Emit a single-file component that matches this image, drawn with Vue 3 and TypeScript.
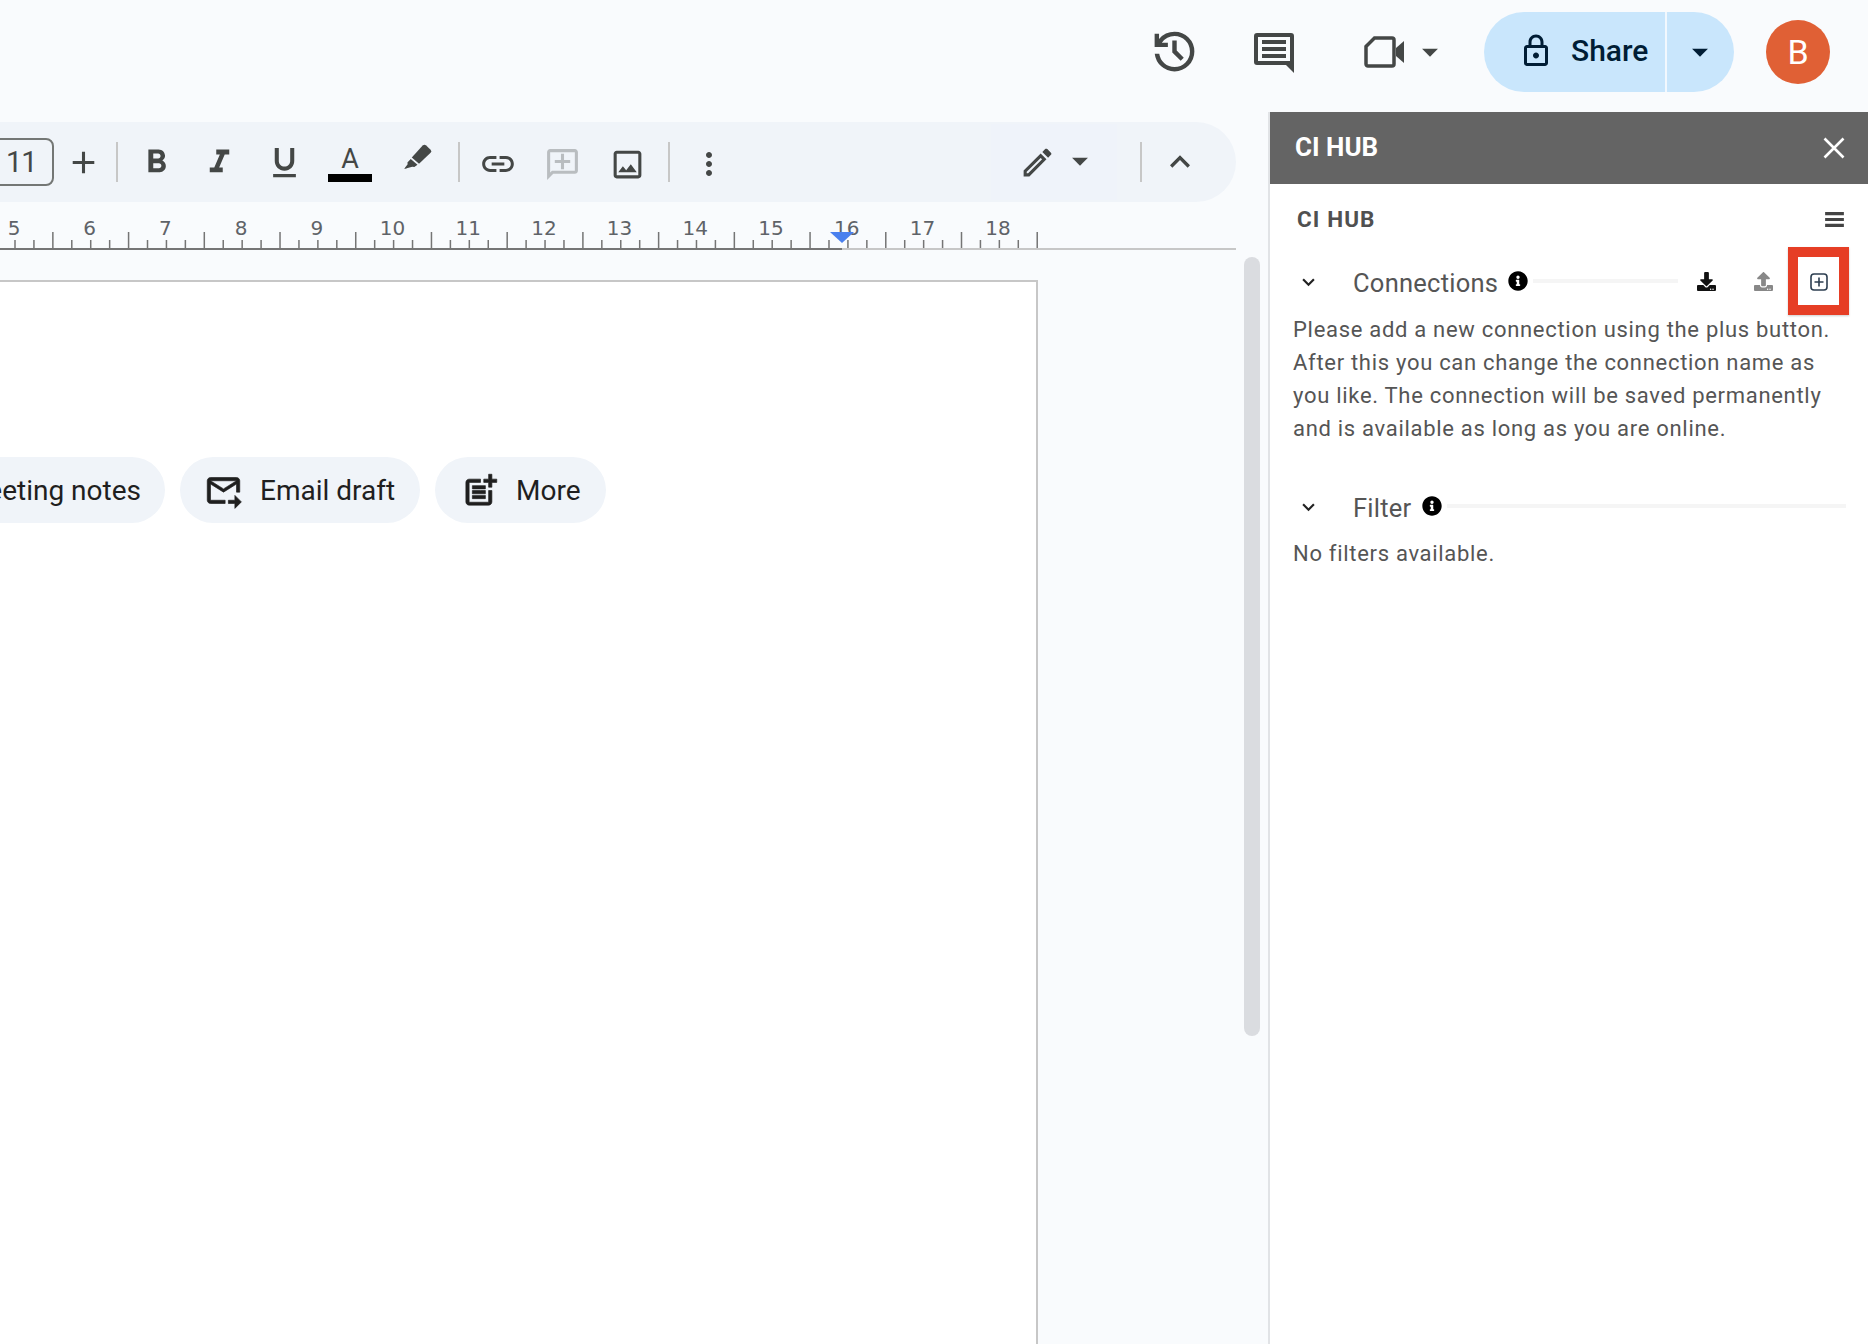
<script setup lang="ts">
const icons: Record<string, string> = {
  history: 'M12 21q-3.45 0-6.012-2.288T3.05 13H5.1q.35 2.6 2.313 4.3T12 19q2.925 0 4.963-2.037T19 12q0-2.925-2.037-4.962T12 5q-1.725 0-3.225.8T6.25 8H9v2H3V4h2v2.35q1.275-1.6 3.113-2.475T12 3q3.75 0 6.375 2.625T21 12q0 3.75-2.625 6.375T12 21Zm2.8-4.8L11 12.4V7h2v4.6l3.2 3.2-1.4 1.4Z',
  lock: 'M18 8h-1V6c0-2.76-2.24-5-5-5S7 3.24 7 6v2H6c-1.1 0-2 .9-2 2v10c0 1.1.9 2 2 2h12c1.1 0 2-.9 2-2V10c0-1.1-.9-2-2-2zM9 6c0-1.66 1.34-3 3-3s3 1.34 3 3v2H9V6zm9 14H6V10h12v10zm-6-3c1.1 0 2-.9 2-2s-.9-2-2-2-2 .9-2 2 .9 2 2 2z',
  caret: 'M7 10l5 5 5-5z',
  plus: 'M19 13h-6v6h-2v-6H5v-2h6V5h2v6h6v2z',
  bold: 'M15.6 10.79c.97-.67 1.65-1.77 1.65-2.79 0-2.26-1.75-4-4-4H7v14h7.04c2.09 0 3.71-1.7 3.71-3.79 0-1.52-.86-2.82-2.15-3.42zM10 6.5h3c.83 0 1.5.67 1.5 1.5s-.67 1.5-1.5 1.5h-3v-3zm3.5 9H10v-3h3.5c.83 0 1.5.67 1.5 1.5s-.67 1.5-1.5 1.5z',
  italic: 'M10 4v3h2.21l-3.42 8H6v3h8v-3h-2.21l3.42-8H18V4z',
  underline: 'M12 17c3.31 0 6-2.69 6-6V3h-2.5v8c0 1.93-1.57 3.5-3.5 3.5S8.5 12.93 8.5 11V3H6v8c0 3.31 2.69 6 6 6zm-7 2v2h14v-2H5z',
  link: 'M3.9 12c0-1.71 1.39-3.1 3.1-3.1h4V7H7c-2.76 0-5 2.24-5 5s2.24 5 5 5h4v-1.9H7c-1.71 0-3.1-1.39-3.1-3.1zM8 13h8v-2H8v2zm9-6h-4v1.9h4c1.71 0 3.1 1.39 3.1 3.1s-1.39 3.1-3.1 3.1h-4V17h4c2.76 0 5-2.24 5-5s-2.24-5-5-5z',
  comment: 'M22 4c0-1.1-.9-2-2-2H4c-1.1 0-2 .9-2 2v12c0 1.1.9 2 2 2h14l4 4V4zm-2 13.17L18.83 16H4V4h16v13.17zM13 5h-2v4H7v2h4v4h2v-4h4V9h-4V5z',
  image: 'M19 5v14H5V5h14m0-2H5c-1.1 0-2 .9-2 2v14c0 1.1.9 2 2 2h14c1.1 0 2-.9 2-2V5c0-1.1-.9-2-2-2zm-4.86 8.86l-3 3.87L9 13.14 6 17h12l-3.86-5.14z',
  dots: 'M12 8c1.1 0 2-.9 2-2s-.9-2-2-2-2 .9-2 2 .9 2 2 2zm0 2c-1.1 0-2 .9-2 2s.9 2 2 2 2-.9 2-2-.9-2-2-2zm0 6c-1.1 0-2 .9-2 2s.9 2 2 2 2-.9 2-2-.9-2-2-2z',
  pencil: 'M14.06 9.02l.92.92L5.92 19H5v-.92l9.06-9.06M17.66 3c-.25 0-.51.1-.7.29l-1.83 1.83 3.75 3.75 1.83-1.83c.39-.39.39-1.02 0-1.41l-2.34-2.34c-.2-.2-.45-.29-.71-.29zm-3.6 3.19L3 17.25V21h3.75L17.81 9.94l-3.75-3.75z',
  chevronUp: 'M7.41 15.41L12 10.83l4.59 4.58L18 14l-6-6-6 6z',
  email: 'M20 4H4c-1.1 0-2 .9-2 2v12c0 1.1.9 2 2 2h9v-2H4V8l8 5 8-5v5h2V6c0-1.1-.9-2-2-2zm-8 7L4 6h16l-8 5zm7 4l4 4-4 4v-3h-4v-2h4v-3z',
  postAdd: 'M17 19.22H5V7h7V5H5c-1.1 0-2 .9-2 2v12c0 1.1.9 2 2 2h12c1.1 0 2-.9 2-2v-7h-2v7.22zM19 2h-2v3h-3c.01.01 0 2 0 2h3v2.99c.01.01 2 0 2 0V7h3V5h-3V2zM7 9h8v2H7zM7 12v2h8v-2h-3zM7 15h8v2H7z',
  info: 'M256 8C119.043 8 8 119.083 8 256c0 136.997 111.043 248 248 248s248-111.003 248-248C504 119.083 392.957 8 256 8zm0 110c23.196 0 42 18.804 42 42s-18.804 42-42 42-42-18.804-42-42 18.804-42 42-42zm56 254c0 6.627-5.373 12-12 12h-88c-6.627 0-12-5.373-12-12v-24c0-6.627 5.373-12 12-12h12v-64h-12c-6.627 0-12-5.373-12-12v-24c0-6.627 5.373-12 12-12h64c6.627 0 12 5.373 12 12v100h12c6.627 0 12 5.373 12 12v24z',
  download: 'M216 0h80c13.3 0 24 10.7 24 24v168h87.7c17.8 0 26.7 21.5 14.1 34.1L269.7 378.3c-7.5 7.5-19.8 7.5-27.3 0L90.1 226.1c-12.6-12.6-3.7-34.1 14.1-34.1H192V24c0-13.3 10.7-24 24-24zm296 376v112c0 13.3-10.7 24-24 24H24c-13.3 0-24-10.7-24-24V376c0-13.3 10.7-24 24-24h146.7l49 49c20.1 20.1 52.5 20.1 72.6 0l49-49H488c13.3 0 24 10.7 24 24zm-124 88c0-11-9-20-20-20s-20 9-20 20 9 20 20 20 20-9 20-20zm64 0c0-11-9-20-20-20s-20 9-20 20 9 20 20 20 20-9 20-20z',
  upload: 'M296 384h-80c-13.3 0-24-10.7-24-24V192h-87.7c-17.8 0-26.7-21.5-14.1-34.1L242.3 5.7c7.5-7.5 19.8-7.5 27.3 0l152.2 152.2c12.6 12.6 3.7 34.1-14.1 34.1H320v168c0 13.3-10.7 24-24 24zm216-8v112c0 13.3-10.7 24-24 24H24c-13.3 0-24-10.7-24-24V376c0-13.3 10.7-24 24-24h136v8c0 30.9 25.1 56 56 56h80c30.9 0 56-25.1 56-56v-8h136c13.3 0 24 10.7 24 24zm-124 88c0-11-9-20-20-20s-20 9-20 20 9 20 20 20 20-9 20-20zm64 0c0-11-9-20-20-20s-20 9-20 20 9 20 20 20 20-9 20-20z',
}

const tickStep = 18.93
const ticks = Array.from({ length: 56 }, (_, i) => {
  const x = 15 + tickStep * i
  return { x, top: i % 4 === 2 ? 30 : 38 }
}).filter((t) => t.x <= 1038)

const numbers = Array.from({ length: 14 }, (_, i) => ({ label: String(i + 5), x: 14 + 75.7 * i }))

const sections = [
  { title: 'Connections', actions: true, text: 'Please add a new connection using the plus button. After this you can change the connection name as you like. The connection will be saved permanently and is available as long as you are online.' },
  { title: 'Filter', actions: false, text: 'No filters available.' },
]
</script>

<template>
  <div class="app">
    <header class="topbar">
      <svg class="ic-history" viewBox="0 0 24 24"><path :d="icons.history" /></svg>
      <svg class="ic-chat" viewBox="0 0 40 40">
        <path d="M3 0h34a3 3 0 0 1 3 3v37l-8-8H3a3 3 0 0 1-3-3V3a3 3 0 0 1 3-3zm1 4v24h32V4z" />
        <path d="M8 7h24v4H8zM8 14h24v4H8zM8 21h24v4H8z" />
      </svg>
      <svg class="ic-meet" viewBox="0 0 40 32">
        <path class="meet-body" d="M10.5 2H28a2 2 0 0 1 2 2v24a2 2 0 0 1-2 2H4a2 2 0 0 1-2-2V10.500z" />
        <path d="M32 12l8-7v22l-8-7z" />
      </svg>
      <svg class="ic-caret meet-caret" viewBox="0 0 24 24"><path :d="icons.caret" /></svg>
      <div class="share">
        <div class="share-main">
          <svg class="ic-lock" viewBox="0 0 24 24"><path :d="icons.lock" /></svg>
          <span class="share-label">Share</span>
        </div>
        <div class="share-more">
          <svg class="ic-caret" viewBox="0 0 24 24"><path :d="icons.caret" /></svg>
        </div>
      </div>
      <div class="avatar">B</div>
    </header>

    <div class="main">
      <section class="docs">
        <div class="toolbar">
          <div class="size-box">11</div>
          <span class="slot s-plus"><svg class="ic-m" viewBox="0 0 24 24"><path :d="icons.plus" /></svg></span>
          <i class="sep sep-a"></i>
          <span class="slot s-b"><svg class="ic-f" viewBox="0 0 24 24"><path :d="icons.bold" /></svg></span>
          <span class="slot s-i"><svg class="ic-f" viewBox="0 0 24 24"><path :d="icons.italic" /></svg></span>
          <span class="slot s-u"><svg class="ic-f" viewBox="0 0 24 24"><path :d="icons.underline" /></svg></span>
          <span class="slot s-a"><span class="letter-a">A</span><i class="color-bar"></i></span>
          <span class="slot s-h">
            <svg class="ic-highlight" viewBox="0 0 27 24">
              <path d="M18 1.500a2.500 2.500 0 0 1 3.400 0l4 3.800a2.400 2.400 0 0 1 0 3.400L14.500 19 7.500 13z" />
              <path d="M6.500 14.500l6.500 5.500-3 2.200-2-.2L0 24l3.500-4.500-.2-1.800z" />
            </svg>
          </span>
          <i class="sep sep-b"></i>
          <span class="slot s-l"><svg class="ic-link" viewBox="0 0 24 24"><path :d="icons.link" /></svg></span>
          <span class="slot s-c"><svg class="ic-comment" viewBox="0 0 24 24"><path :d="icons.comment" /></svg></span>
          <span class="slot s-im"><svg class="ic-m" viewBox="0 0 24 24"><path :d="icons.image" /></svg></span>
          <i class="sep sep-c"></i>
          <span class="slot s-d"><svg class="ic-m" viewBox="0 0 24 24"><path :d="icons.dots" /></svg></span>
          <div class="mode">
            <svg class="ic-m" viewBox="0 0 24 24"><path :d="icons.pencil" /></svg>
            <svg class="ic-caret mode-caret" viewBox="0 0 24 24"><path :d="icons.caret" /></svg>
          </div>
          <i class="sep sep-d"></i>
          <span class="slot s-up"><svg class="ic-up" viewBox="0 0 24 24"><path :d="icons.chevronUp" /></svg></span>
        </div>

        <svg class="ruler" viewBox="0 0 1236 50" width="1236" height="50">
          <rect x="0" y="46" width="842" height="2" fill="#757575" />
          <rect x="842" y="46" width="394" height="2" fill="#c7c7c7" />
          <rect v-for="t in ticks" :key="t.x" :x="t.x - 0.75" :y="t.top" width="1.500" :height="46 - t.top" fill="#757575" />
          <text v-for="n in numbers" :key="n.label" :x="n.x" y="33" class="ruler-num" text-anchor="middle">{{ n.label }}</text>
          <path d="M830 30h24l-12 11z" fill="#4a80ee" />
        </svg>

        <div class="canvas">
          <div class="page">
            <div class="chips">
              <div class="chip chip-first"><span>Meeting notes</span></div>
              <div class="chip chip-email">
                <svg class="ic-chip" viewBox="0 0 24 24"><path :d="icons.email" /></svg>
                <span>Email draft</span>
              </div>
              <div class="chip chip-more">
                <svg class="ic-chip" viewBox="0 0 24 24"><path :d="icons.postAdd" /></svg>
                <span>More</span>
              </div>
            </div>
          </div>
          <div class="scrollbar"></div>
        </div>
      </section>

      <aside class="panel">
        <div class="panel-head">
          <span>CI HUB</span>
          <svg class="ic-close" viewBox="0 0 22 22"><path d="M1.500 1.500l19 19M20.500 1.500l-19 19" /></svg>
        </div>
        <div class="panel-sub">
          <span>CI HUB</span>
          <svg class="ic-bars" viewBox="0 0 20 16"><path d="M0 0h20v3.400H0zM0 6.300h20v3.400H0zM0 12.600h20V16H0z" /></svg>
        </div>

        <div v-for="s in sections" :key="s.title" class="section" :class="{ 'section-actions': s.actions }">
          <div class="sec-row">
            <svg class="ic-chev" viewBox="0 0 12 8"><path d="M1 1l5 5 5-5" /></svg>
            <span class="sec-title">{{ s.title }}</span>
            <svg class="ic-info" viewBox="0 0 512 512"><path :d="icons.info" /></svg>
            <i class="sec-line"></i>
            <template v-if="s.actions">
              <svg class="ic-act" viewBox="0 0 512 512"><path :d="icons.download" /></svg>
              <svg class="ic-act ic-act-up" viewBox="0 0 512 512"><path :d="icons.upload" /></svg>
              <div class="add-box">
                <svg class="ic-add" viewBox="0 0 18 18"><rect x="1" y="1" width="16" height="16" rx="3" /><path d="M9 4.500v9M4.500 9h9" /></svg>
              </div>
            </template>
          </div>
          <p class="sec-text">{{ s.text }}</p>
        </div>
      </aside>
    </div>
  </div>
</template>

<style>
html, body { margin: 0; padding: 0; overflow: hidden; background: #f9fbfd; }
</style>

<style scoped>
* { box-sizing: border-box; }
.app { width: 1868px; height: 1344px; overflow: hidden; background: #f9fbfd; font-family: Roboto, "Liberation Sans", sans-serif; }
svg { display: block; flex-shrink: 0; }
i { display: block; }

.topbar { height: 112px; display: flex; align-items: center; padding-right: 38px; justify-content: flex-end; color: #444746; fill: #444746; padding-bottom: 8px; }
.ic-history { width: 53px; height: 53px; margin-right: 53px; margin-top: -2px; }
.ic-chat { width: 40px; height: 40px; margin-right: 70px; margin-top: 2px; }
.ic-meet { width: 40px; height: 32px; margin-right: 7px; }
.meet-body { fill: none; stroke: #444746; stroke-width: 3.5; }
.ic-caret { width: 38px; height: 38px; }
.meet-caret { margin-right: 35px; }
.share { display: flex; height: 80px; fill: #001d35; color: #001d35; }
.share-main { width: 183px; background: #c9e6fc; border-radius: 40px 0 0 40px; display: flex; align-items: center; padding-left: 34px; font-size: 30px; font-weight: 500; border-right: 2px solid #f2f8fe; }
.share-label { margin-top: -4px; }
.ic-lock { width: 36px; height: 36px; margin-right: 17px; margin-top: -2px; }
.share-more { width: 67px; background: #c9e6fc; border-radius: 0 40px 40px 0; display: flex; align-items: center; padding-left: 14px; }
.avatar { width: 64px; height: 64px; border-radius: 50%; background: #e06035; color: #fff; margin-left: 32px; display: flex; align-items: center; justify-content: center; font-size: 34px; }

.main { display: flex; height: 1232px; }
.docs { width: 1268px; flex-shrink: 0; }

.toolbar { margin-top: 10px; width: 1236px; height: 80px; background: #f0f4f9; border-radius: 0 40px 40px 0; display: flex; align-items: center; overflow: hidden; fill: #444746; color: #444746; padding-right: 34px; }
.size-box { margin-left: -20px; width: 74px; height: 48px; flex-shrink: 0; border: 2px solid #747775; border-radius: 8px; font-size: 29px; padding-left: 24px; line-height: 44px; letter-spacing: -1px; }
.slot { display: flex; align-items: center; justify-content: center; flex-direction: column; width: 44px; height: 56px; flex-shrink: 0; position: relative; }
.sep { width: 2px; height: 40px; background: #c7c7c7; flex-shrink: 0; }
.ic-m { width: 37px; height: 37px; }
.ic-f { width: 39px; height: 39px; }
.s-plus { margin-left: 7px; }
.sep-a { margin-left: 11px; }
.s-b { margin-left: 16px; }
.s-i { margin-left: 19px; }
.s-u { margin-left: 21px; }
.s-a { margin-left: 22px; justify-content: flex-end; }
.letter-a { font-size: 27px; line-height: 24px; margin-bottom: 3px; }
.color-bar { width: 44px; height: 8px; background: #000; margin-bottom: 8px; }
.s-h { margin-left: 24px; }
.ic-highlight { width: 28px; height: 25px; margin-bottom: 12px; }
.sep-b { margin-left: 18px; }
.s-l { margin-left: 16px; }
.ic-link { width: 38px; height: 38px; margin-top: 4px; }
.s-c { margin-left: 20px; }
.ic-comment { width: 37px; height: 37px; fill: #b9bdc0; transform: scaleX(-1); margin-top: 4px; }
.s-im { margin-left: 21px; }
.sep-c { margin-left: 19px; }
.s-d { margin-left: 17px; }
.s-d .ic-m { width: 36px; height: 36px; margin-top: 4px; }
.s-im .ic-m { margin-top: 4px; }
.mode { margin-left: auto; width: 126px; height: 76px; background: #eff3fa; display: flex; align-items: center; padding-left: 28px; flex-shrink: 0; }
.mode-caret { margin-left: 5px; margin-top: -2px; }
.sep-d { margin-left: 23px; }
.s-up { margin-left: 16px; }
.ic-up { width: 40px; height: 40px; }

.ruler { margin-top: 0; }
.ruler-num { font-family: "DejaVu Sans", sans-serif; font-size: 20px; fill: #5f6368; }
.canvas { display: flex; align-items: flex-start; margin-top: -2px; }
.page { width: 1038px; height: 1100px; background: #fff; border-top: 2px solid #c7c7c7; border-right: 2px solid #c7c7c7; margin-top: 30px; padding-top: 175px; flex-shrink: 0; }
.scrollbar { width: 16px; height: 779px; background: #dadce0; border-radius: 8px; margin-left: 206px; margin-top: 7px; flex-shrink: 0; }
.chips { width: 606px; display: flex; justify-content: flex-end; gap: 15px; overflow: visible; }
.chip { height: 66px; border-radius: 33px; background: #f0f4f9; display: flex; align-items: center; flex-shrink: 0; font-size: 28px; color: #1f1f1f; fill: #1f1f1f; white-space: nowrap; }
.chip-first { padding: 0 24px; }
.chip-email { width: 240px; padding-left: 24px; gap: 17px; }
.chip-more { width: 171px; padding-left: 26px; gap: 16px; }
.ic-chip { width: 39px; height: 39px; stroke: #1f1f1f; stroke-width: 0.4; }

.panel { width: 600px; flex-shrink: 0; background: #fff; border-left: 2px solid #e1e3e6; height: 1232px; color: #555; }
.panel-head { height: 72px; background: #646464; color: #fff; display: flex; align-items: center; justify-content: space-between; padding: 0 23px 0 25px; font-weight: 700; font-size: 26px; letter-spacing: 0; }
.panel-head span { margin-top: -2px; }
.ic-close { width: 22px; height: 22px; fill: none; stroke: #fff; stroke-width: 2.6; }
.panel-sub { height: 63px; padding: 7px 24px 0 27px; display: flex; align-items: center; justify-content: space-between; font-size: 22.500px; font-weight: 700; letter-spacing: 1.1px; color: #505050; }
.ic-bars { width: 19px; height: 15px; fill: #444; }
.section { padding-right: 22px; }
.section + .section { margin-top: 39px; }
.section-actions { padding-right: 19px; }
.sec-row { height: 44px; display: flex; align-items: center; padding-left: 32px; }
.section-actions .sec-row { height: 68px; margin-bottom: -2px; }
.ic-chev { width: 13px; height: 9px; fill: none; stroke: #222; stroke-width: 2; margin-right: 38px; margin-top: 2px; }
.sec-title { font-size: 25.500px; letter-spacing: 0.25px; font-weight: 400; color: #555; margin-top: 4px; }
.ic-info { width: 20px; height: 20px; fill: #000; margin-left: 10px; }
.sec-line { flex: 1; height: 4px; background: #f5f5f5; margin-left: 5px; }
.section-actions .sec-line { margin-right: 18px; }
.ic-act { width: 21px; height: 19px; fill: #111; }
.ic-act-up { margin-left: 36px; fill: #888; }
.add-box { width: 61px; height: 68px; margin-left: 14px; border: 10px solid #e63e25; background: #fff; display: flex; align-items: center; justify-content: center; box-shadow: 0 1px 2px rgba(0, 0, 0, 0.2); padding: 2px 0 0 1px; }
.ic-add { width: 18px; height: 18px; fill: none; stroke: #2c3e50; stroke-width: 1.600; }
.sec-text { margin: 0; padding-left: 23px; width: 578px; font-size: 22px; line-height: 33px; letter-spacing: 0.7px; color: #555; }
.section + .section .sec-text { margin-top: 8.500px; }
</style>
